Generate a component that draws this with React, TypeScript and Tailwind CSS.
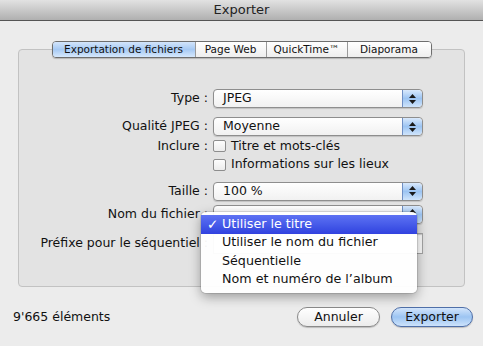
const font = { fontFamily: '"DejaVu Sans", "Liberation Sans", sans-serif' };

function Stepper() {
  return (
    <div className="flex h-full w-[20px] flex-col items-center justify-center gap-[2px] rounded-r-[4px] border-l border-[#6f8fc4] bg-gradient-to-b from-[#d9e9fc] via-[#9cc4f2] to-[#cfe4fb]">
      <svg width="7" height="4" viewBox="0 0 7 4">
        <path d="M3.5 0 L7 4 L0 4 Z" fill="#1a1a1a" />
      </svg>
      <svg width="7" height="4" viewBox="0 0 7 4">
        <path d="M0 0 L7 0 L3.5 4 Z" fill="#1a1a1a" />
      </svg>
    </div>
  );
}

function Select({ value }: { value?: string }) {
  return (
    <div className="flex h-[19px] w-[210px] items-stretch overflow-hidden rounded-[4px] border border-[#8e8e8e] bg-gradient-to-b from-[#ffffff] to-[#f1f1f1] shadow-[0_1px_1px_rgba(0,0,0,0.15)]">
      <div className="flex flex-1 items-center pl-[9px] text-[12.5px] leading-none text-[#111]">{value}</div>
      <Stepper />
    </div>
  );
}

function Checkbox({ label }: { label: string }) {
  return (
    <div className="flex h-[18px] items-center gap-[5px]">
      <div className="h-[12px] w-[13px] rounded-[2px] border border-[#8d8d8d] bg-gradient-to-b from-[#fdfdfd] to-[#ececec]" />
      <span className="text-[12.5px] text-[#111]">{label}</span>
    </div>
  );
}

function Row({ label, children, className = '' }: { label: string; children: React.ReactNode; className?: string }) {
  return (
    <div className={`flex items-center ${className}`}>
      <div className="w-[194px] shrink-0 whitespace-nowrap pr-[5px] text-right text-[12.5px] text-[#111]">{label}</div>
      {children}
    </div>
  );
}

const tabs = ['Exportation de fichiers', 'Page Web', 'QuickTime™', 'Diaporama'];
const tabWidths = ['w-[142px]', 'w-[71px]', 'w-[81px]', 'w-[84px]'];

const menuItems = ['Utiliser le titre', 'Utiliser le nom du fichier', 'Séquentielle', "Nom et numéro de l’album"];

export default function App() {
  return (
    <div style={font} className="relative flex h-[346px] w-[483px] flex-col overflow-hidden bg-[#ececec]">
      {/* Title bar */}
      <div className="flex h-[21px] shrink-0 items-center justify-center border-b border-[#555] bg-gradient-to-b from-[#e2e2e2] to-[#b0b0b0] text-[13px] text-[#222]">
        Exporter
      </div>

      {/* Tabs + panel */}
      <div className="mx-[18px] mt-[20px] flex flex-col">
        <div className="relative z-10 flex justify-center">
          <div className="flex h-[17px] overflow-hidden rounded-[4px] border border-[#6e6e6e] shadow-[0_1px_1px_rgba(0,0,0,0.2)]">
            {tabs.map((t, i) => (
              <div
                key={t}
                className={`flex items-center justify-center text-[10.5px] leading-none text-[#111] ${tabWidths[i]} ${
                  i === 0
                    ? 'bg-gradient-to-b from-[#d3e5fb] via-[#a6c9f3] to-[#d6e8fc]'
                    : 'border-l border-[#9a9a9a] bg-gradient-to-b from-[#ffffff] to-[#eeeeee]'
                }`}
              >
                {t}
              </div>
            ))}
          </div>
        </div>

        <div className="-mt-[9px] flex h-[238px] flex-col rounded-[4px] border border-[#c2c2c2] bg-[#e3e3e3] pt-[39px]">
          <Row label="Type :">
            <Select value="JPEG" />
          </Row>
          <Row label="Qualité JPEG :" className="mt-[9px]">
            <Select value="Moyenne" />
          </Row>
          <Row label="Inclure :" className="mt-[1px]">
            <Checkbox label="Titre et mots-clés" />
          </Row>
          <Row label="">
            <Checkbox label="Informations sur les lieux" />
          </Row>
          <Row label="Taille :" className="mt-[8px]">
            <Select value="100 %" />
          </Row>
          <Row label="Nom du fichier :" className="mt-[4px]">
            <Select />
          </Row>
          <Row label="Préfixe pour le séquentiel :" className="mt-[9px]">
            <div className="h-[21px] w-[210px] border border-[#a5a5a5] bg-white shadow-[inset_0_1px_1px_rgba(0,0,0,0.2)]" />
          </Row>
        </div>
      </div>

      {/* Footer */}
      <div className="mt-[20px] flex items-center pl-[13px] pr-[10px]">
        <span className="text-[12.5px] text-[#111]">9'665 éléments</span>
        <div className="ml-auto flex gap-[11px]">
          <button className="h-[20px] w-[83px] rounded-full border border-[#8a8a8a] bg-gradient-to-b from-[#ffffff] to-[#ececec] text-[12.5px] leading-none text-[#111] shadow-[0_1px_1px_rgba(0,0,0,0.2)]">
            Annuler
          </button>
          <button className="h-[20px] w-[82px] rounded-full border border-[#4f6fa8] bg-gradient-to-b from-[#d3e5fb] via-[#9cc4f2] to-[#cde3fb] text-[12.5px] leading-none text-[#111] shadow-[0_1px_1px_rgba(0,0,0,0.2)]">
            Exporter
          </button>
        </div>
      </div>

      {/* Open popup menu */}
      <div className="absolute left-[201px] top-[212px] w-[216px] rounded-[5px] bg-white/95 pb-[4px] pt-[3px] shadow-[0_4px_12px_rgba(0,0,0,0.35)] ring-1 ring-black/10">
        {menuItems.map((m, i) => (
          <div
            key={m}
            className={`flex h-[18.5px] items-center text-[12.7px] leading-none ${
              i === 0 ? 'bg-gradient-to-b from-[#5e72f3] to-[#3141df] font-medium text-white' : 'text-[#111]'
            }`}
          >
            <span className="w-[21px] pl-[6px] text-[13.5px]">{i === 0 ? '✓' : ''}</span>
            {m}
          </div>
        ))}
      </div>
    </div>
  );
}
